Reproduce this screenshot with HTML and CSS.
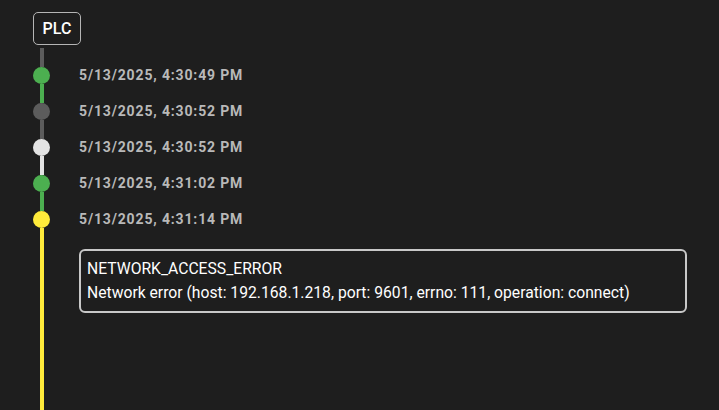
FILE: index.html
```html
<!DOCTYPE html>
<html>
<head>
<meta charset="utf-8">
<link rel="stylesheet" href="styles.css">
</head>
<body>
<h1 class="title">Alarm Step Details</h1>
<div class="page">
  <div class="node">PLC</div>
  <div class="lead seg-gray"></div>
  <div class="timeline">
    <div class="item">
      <div class="rail"><span class="dot c-green"></span><span class="seg c-green"></span></div>
      <div class="content"><div class="date">5/13/2025, 4:30:49 PM</div></div>
    </div>
    <div class="item">
      <div class="rail"><span class="dot c-gray"></span><span class="seg c-gray"></span></div>
      <div class="content"><div class="date">5/13/2025, 4:30:52 PM</div></div>
    </div>
    <div class="item">
      <div class="rail"><span class="dot c-light"></span><span class="seg c-light"></span></div>
      <div class="content"><div class="date">5/13/2025, 4:30:52 PM</div></div>
    </div>
    <div class="item">
      <div class="rail"><span class="dot c-green"></span><span class="seg c-green"></span></div>
      <div class="content"><div class="date">5/13/2025, 4:31:02 PM</div></div>
    </div>
    <div class="item last">
      <div class="rail"><span class="dot c-yellow"></span><span class="seg c-yellow"></span></div>
      <div class="content">
        <div class="date">5/13/2025, 4:31:14 PM</div>
        <div class="error">
          <div class="err-code">NETWORK_ACCESS_ERROR</div>
          <div class="err-msg">Network error (host: 192.168.1.218, port: 9601, errno: 111, operation: connect)</div>
        </div>
      </div>
    </div>
  </div>
</div>
</body>
</html>
```
FILE: styles.css
```css
html, body {
  margin: 0;
  padding: 0;
  background: #1e1e1e;
  height: 100%;
  overflow: hidden;
}
body {
  font-family: Roboto, "Liberation Sans", sans-serif;
  color: #ffffff;
}
.title {
  margin: -29px 0 0 0;
  height: 33px;
  font-size: 24px;
  line-height: 33px;
  font-weight: 700;
  text-align: center;
  color: #ffffff;
}
.page {
  padding-left: 33px;
  padding-top: 8px;
  display: flex;
  flex-direction: column;
}
.node {
  align-self: flex-start;
  box-sizing: border-box;
  width: 48px;
  height: 33px;
  border: 1px solid #b5b5b5;
  border-radius: 5px;
  font-size: 16px;
  font-weight: 500;
  line-height: 31px;
  text-align: center;
  color: #ffffff;
}
.lead {
  width: 4px;
  height: 19px;
  margin-top: 3px;
  margin-left: 7px;
  background: #5c5c5c;
}
.timeline {
  display: flex;
  flex-direction: column;
}
.item {
  display: flex;
  gap: 28px;
  min-height: 36px;
}
.item.last {
  min-height: 400px;
}
.rail {
  width: 18px;
  display: flex;
  flex-direction: column;
  align-items: center;
}
.dot {
  width: 17px;
  height: 17px;
  border-radius: 50%;
  flex: none;
  margin-left: -1px;
}
.seg {
  width: 4px;
  flex: 1;
}
.c-green { background: #4caf50; }
.c-gray { background: #5c5c5c; }
.c-light { background: #e3e3e3; }
.c-yellow { background: #ffeb3b; }
.date {
  font-size: 14px;
  font-weight: 700;
  letter-spacing: 0.85px;
  line-height: 16px;
  color: #b9b9b9;
}
.error {
  margin-top: 22px;
  width: 608px;
  box-sizing: border-box;
  height: 64px;
  border: 2px solid #c8c8c8;
  border-radius: 6px;
  padding: 6px 0 0 6px;
  font-size: 15.7px;
  line-height: 24px;
  color: #ffffff;
}
```
